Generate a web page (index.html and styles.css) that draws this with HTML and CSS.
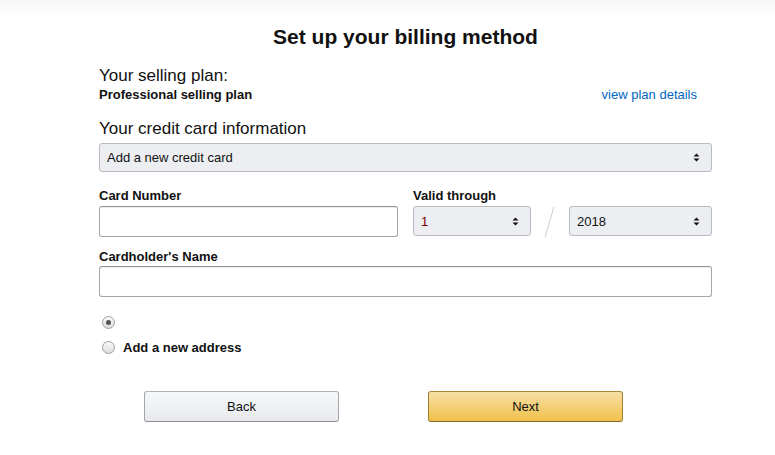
FILE: index.html
```html
<!DOCTYPE html>
<html>
<head>
<meta charset="utf-8">
<link rel="stylesheet" href="styles.css">
</head>
<body>
<div class="topband"></div>
<main class="page">
  <h1 class="title">Set up your billing method</h1>
  <section class="plan">
    <div class="plan-label">Your selling plan:</div>
    <div class="plan-row">
      <span class="plan-name">Professional selling plan</span>
      <a class="plan-link" href="#">view plan details</a>
    </div>
  </section>
  <section class="card">
    <div class="section-label">Your credit card information</div>
    <div class="select wide"><span>Add a new credit card</span><svg class="arrows" width="7" height="9" viewBox="0 0 7 9"><path d="M0.5 3.5 L3.5 0.5 L6.5 3.5 Z M0.5 5.5 L3.5 8.5 L6.5 5.5 Z" fill="#111"/></svg></div>
    <div class="row">
      <div class="field cardnum">
        <label class="lbl">Card Number</label>
        <div class="input"></div>
      </div>
      <div class="field valid">
        <label class="lbl">Valid through</label>
        <div class="valid-row">
          <div class="select month"><span class="month-val">1</span><svg class="arrows" width="7" height="9" viewBox="0 0 7 9"><path d="M0.5 3.5 L3.5 0.5 L6.5 3.5 Z M0.5 5.5 L3.5 8.5 L6.5 5.5 Z" fill="#111"/></svg></div>
          <span class="slash"></span>
          <div class="select year"><span>2018</span><svg class="arrows" width="7" height="9" viewBox="0 0 7 9"><path d="M0.5 3.5 L3.5 0.5 L6.5 3.5 Z M0.5 5.5 L3.5 8.5 L6.5 5.5 Z" fill="#111"/></svg></div>
        </div>
      </div>
    </div>
    <div class="field name">
      <label class="lbl">Cardholder's Name</label>
      <div class="input"></div>
    </div>
  </section>
  <section class="address">
    <div class="radio-row"><span class="radio checked"></span></div>
    <div class="radio-row"><span class="radio"></span><span class="radio-text">Add a new address</span></div>
  </section>
  <div class="buttons">
    <button class="btn back">Back</button>
    <button class="btn next">Next</button>
  </div>
</main>
</body>
</html>
```
FILE: styles.css
```css
* { box-sizing: border-box; }
html, body { margin: 0; padding: 0; background: #fff; }
body {
  font-family: "Liberation Sans", Arial, sans-serif;
  color: #111;
  width: 775px;
  height: 455px;
  overflow: hidden;
  position: relative;
}
.topband {
  position: absolute;
  left: 0; top: 0; right: 0;
  height: 16px;
  background: linear-gradient(#f6f6f6, #fff);
}
.page {
  position: relative;
  width: 613px;
  margin-left: 99px;
  padding-top: 25px;
}
.title {
  margin: 0;
  font-size: 21px;
  font-weight: 700;
  text-align: center;
  line-height: 24px;
  color: #111;
}
.plan { margin-top: 17px; }
.plan-label { font-size: 17px; line-height: 20px; }
.plan-row {
  display: flex;
  justify-content: space-between;
  align-items: baseline;
  margin-top: 1px;
}
.plan-name { font-size: 13px; font-weight: 700; line-height: 16px; }
.plan-link {
  font-size: 13px;
  color: #0066c0;
  text-decoration: none;
  margin-right: 15px;
}
.card { margin-top: 16px; }
.section-label { font-size: 17px; line-height: 20px; }
.select {
  display: flex;
  align-items: center;
  justify-content: space-between;
  height: 29px;
  padding: 0 11px 0 7px;
  background: #eceef1;
  border: 1px solid #b8bcc2;
  border-radius: 3px;
  font-size: 13px;
  color: #111;
}
.select.wide { margin-top: 4px; }
.arrows { display: block; }
.row {
  display: flex;
  margin-top: 16px;
}
.field { display: flex; flex-direction: column; }
.lbl {
  font-size: 13px;
  font-weight: 700;
  line-height: 16px;
  margin-bottom: 2px;
}
.input {
  height: 31px;
  border: 1px solid #a6a6a6;
  border-top-color: #949494;
  border-radius: 3px;
  background: #fff;
  box-shadow: 0 1px 0 rgba(0,0,0,.07) inset;
}
.cardnum { width: 299px; }
.valid { margin-left: 15px; width: 299px; }
.valid-row { display: flex; align-items: center; }
.select.month { width: 118px; height: 30px; }
.select.year { width: 143px; height: 30px; }
.month-val { color: #7a0000; }
.slash {
  width: 38px;
  height: 30px;
  position: relative;
}
.slash::before {
  content: "";
  position: absolute;
  left: 18px;
  top: 0;
  width: 1px;
  height: 32px;
  background: #cfcfcf;
  transform: rotate(16deg);
}
.name { margin-top: 12px; }
.name .lbl { margin-bottom: 1px; }
.address { margin-top: 19px; padding-left: 3px; }
.radio-row {
  display: flex;
  align-items: center;
  height: 13px;
  margin-bottom: 12px;
}
.radio {
  width: 13px;
  height: 13px;
  border-radius: 50%;
  border: 1px solid #a0a0a0;
  background: linear-gradient(#fafafa, #dcdcdc);
  position: relative;
}
.radio.checked::after {
  content: "";
  position: absolute;
  left: 3px; top: 3px;
  width: 5px; height: 5px;
  border-radius: 50%;
  background: #555;
}
.radio-text {
  font-size: 13px;
  font-weight: 700;
  margin-left: 8px;
}
.buttons {
  display: flex;
  margin-top: 37px;
  padding-left: 45px;
  gap: 89px;
}
.btn {
  width: 195px;
  height: 31px;
  border-radius: 3px;
  font-family: "Liberation Sans", Arial, sans-serif;
  font-size: 13px;
  color: #111;
  padding: 0;
}
.back {
  background: linear-gradient(#f7f8fa, #e7e9ec);
  border: 1px solid #adb1b8;
  border-color: #adb1b8 #a2a6ac #8d9096;
}
.next {
  background: linear-gradient(#f7dfa5, #f0c14b);
  border: 1px solid #a88734;
  border-color: #a88734 #9c7e31 #846a29;
}
```
